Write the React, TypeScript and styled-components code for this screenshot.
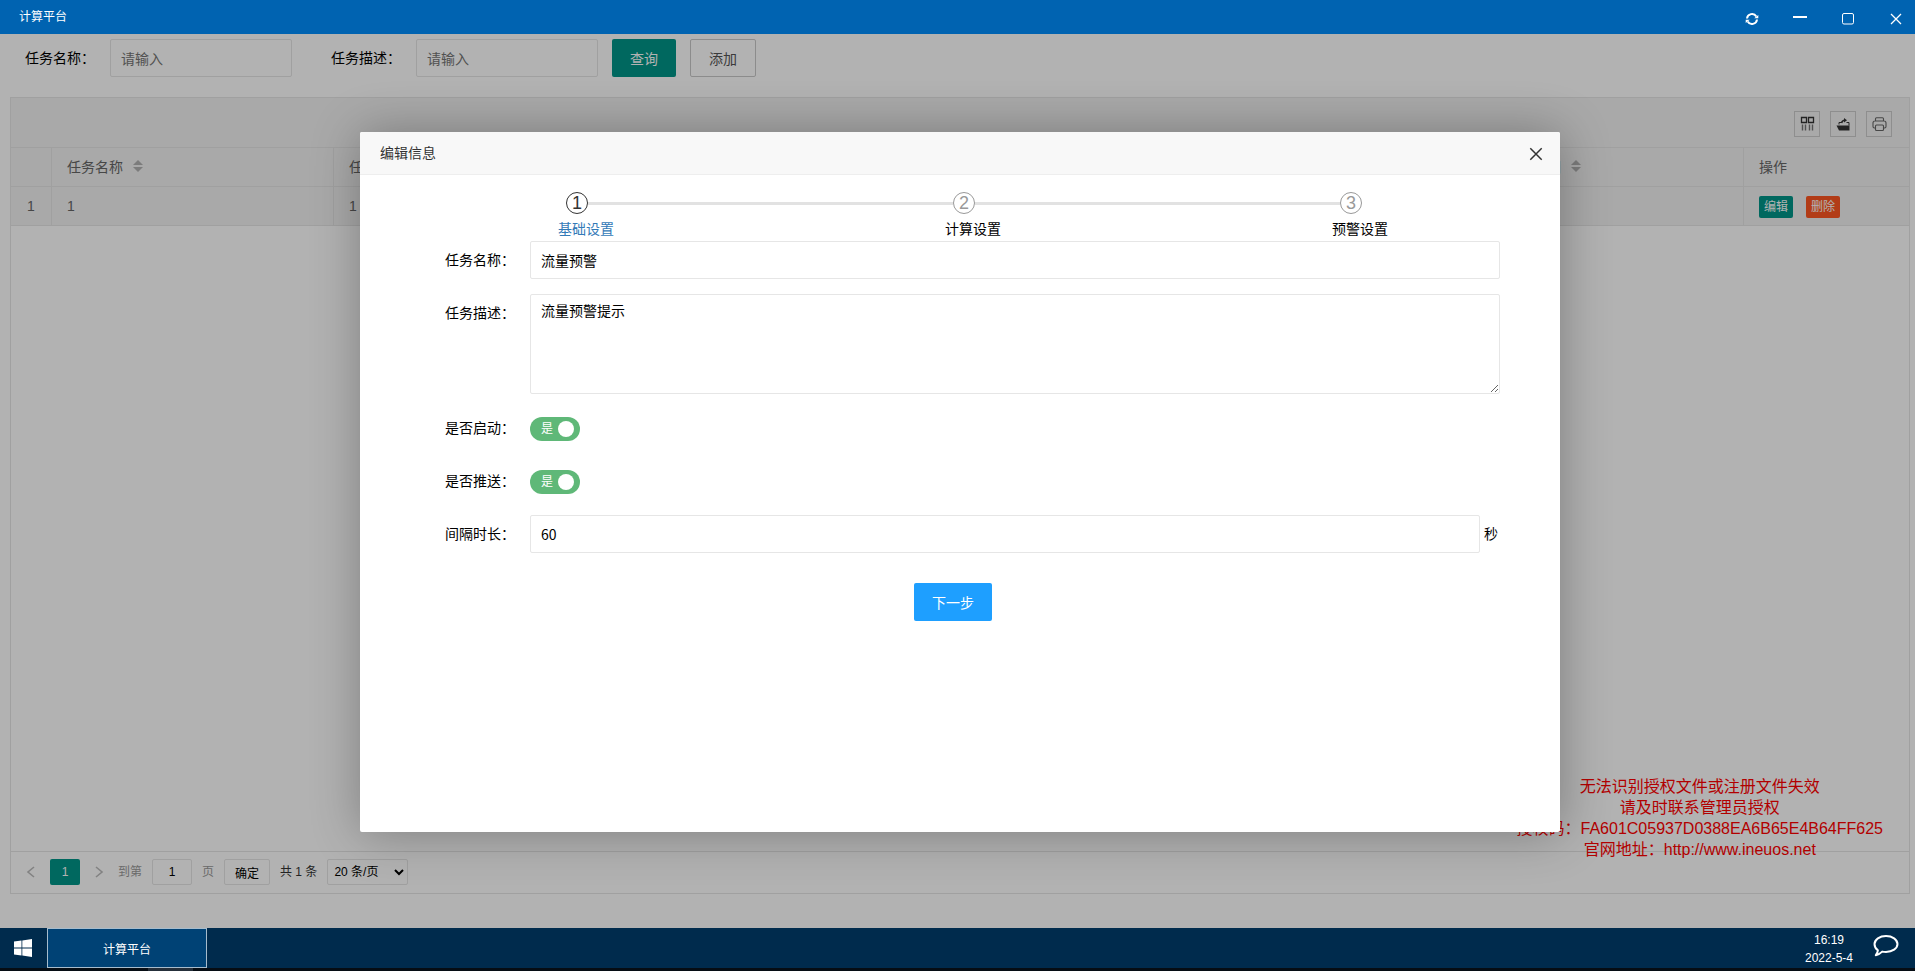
import React, { useState } from "react";
import styled, { createGlobalStyle, css } from "styled-components";

const GlobalStyle = createGlobalStyle`
  * { box-sizing: border-box; }
  html, body, #root { height: 100%; }
  body {
    margin: 0;
    overflow: hidden;
    font: 14px/24px "Liberation Sans", "Noto Sans CJK SC", sans-serif;
    color: #000;
  }
  button, input, select, textarea { font-family: inherit; margin: 0; }
  button { cursor: pointer; padding: 0; }
  a { color: inherit; text-decoration: none; }
`;

const Desktop = styled.div`
  height: 100%;
  display: flex;
  flex-direction: column;
  background: #fff;
`;

const TitleBar = styled.header`
  flex: none;
  height: 34px;
  padding-left: 19px;
  display: flex;
  justify-content: space-between;
  align-items: center;
  background: #0063b1;
  color: #fff;
  font-size: 12px;
`;

const WindowTitle = styled.span`
  line-height: 34px;
`;

const WindowControls = styled.div`
  display: flex;
  height: 34px;
  padding-right: 3px;
`;

const WindowButton = styled.button`
  width: 32px;
  margin-right: 16px;
  border: 0;
  background: none;
  color: #fff;
  display: flex;
  align-items: center;
  justify-content: center;
  padding-top: 4px;
  &:last-child { margin-right: 0; }
`;

const Workspace = styled.main`
  position: relative;
  flex: 1;
  min-height: 0;
  display: flex;
  flex-direction: column;
  padding: 5px 5px 34px 0;
`;

const SearchForm = styled.form`
  display: flex;
  gap: 14px;
  margin-bottom: 20px;
`;

const SearchField = styled.div`
  display: flex;
`;

const FieldLabel = styled.label<{ $wide?: boolean }>`
  flex: none;
  width: ${(p) => (p.$wide ? "100px" : "110px")};
  padding: 7px 15px 7px 0;
  text-align: right;
  white-space: nowrap;
`;

const inputLook = css`
  border: 1px solid #e6e6e6;
  border-radius: 2px;
  background: #fff;
  font-size: 14px;
  color: #000;
  outline: none;
`;

const TextInput = styled.input`
  ${inputLook}
  height: 38px;
  padding: 0 10px;
  font-family: "Noto Sans CJK SC", sans-serif;
  &::placeholder { color: #757575; }
`;

const SearchInput = styled(TextInput)`
  width: 182px;
`;

const Button = styled.button<{ $tone: "primary" | "plain" | "normal" }>`
  height: 38px;
  padding: 0 18px;
  border-radius: 2px;
  font-size: 14px;
  color: ${(p) => (p.$tone === "plain" ? "#555" : "#fff")};
  background: ${(p) => ({ primary: "#009688", plain: "#fff", normal: "#1e9fff" })[p.$tone]};
  border: ${(p) => (p.$tone === "plain" ? "1px solid #c9c9c9" : "0")};
`;

const TablePanel = styled.section`
  flex: 1;
  min-height: 0;
  margin-left: 10px;
  display: flex;
  flex-direction: column;
  border: 1px solid #e6e6e6;
`;

const TableToolbar = styled.div`
  height: 50px;
  padding: 2px 17px 0 0;
  display: flex;
  align-items: center;
  justify-content: flex-end;
  gap: 10px;
  background: #f2f2f2;
  border-bottom: 1px solid #e6e6e6;
`;

const ToolButton = styled.button`
  width: 26px;
  height: 26px;
  border: 1px solid #ccc;
  background: none;
  color: #333;
  display: flex;
  align-items: center;
  justify-content: center;
`;

const TableBody = styled.div`
  flex: 1;
`;

const DataTable = styled.table`
  width: 100%;
  table-layout: fixed;
  border-collapse: separate;
  border-spacing: 0;
  color: #666;
`;

const Cell = styled.td<{ $center?: boolean }>`
  height: 39px;
  padding: 0 15px;
  font-weight: 400;
  text-align: ${(p) => (p.$center ? "center" : "left")};
  white-space: nowrap;
  background: #f2f2f2;
  border: 0 solid #e6e6e6;
  border-width: 0 1px 1px 0;
  &:last-child { border-right-width: 0; }
`;

const HeaderLabel = styled.div`
  display: flex;
  align-items: center;
  gap: 10px;
`;

const SortMark = styled.span`
  display: flex;
  flex-direction: column;
  gap: 2px;
  padding-bottom: 3px;
  &::before, &::after {
    content: "";
    border: 5px solid transparent;
  }
  &::before { border-top-width: 0; border-bottom-color: #b2b2b2; }
  &::after { border-bottom-width: 0; border-top-color: #b2b2b2; }
`;

const RowActions = styled.div`
  display: flex;
  gap: 13px;
  padding-top: 2px;
`;

const RowButton = styled.button<{ $danger?: boolean }>`
  width: 34px;
  height: 22px;
  border: 0;
  border-radius: 2px;
  font-size: 12px;
  line-height: 22px;
  color: #fff;
  background: ${(p) => (p.$danger ? "#ff5722" : "#009688")};
`;

const Pager = styled.nav`
  height: 42px;
  display: flex;
  align-items: center;
  padding: 0 7px 1px;
  border-top: 1px solid #e6e6e6;
  font-size: 12px;
  color: #333;
`;

const PageArrow = styled.button`
  width: 26px;
  height: 26px;
  margin-right: 6px;
  border: 0;
  background: none;
  color: #bbb;
  display: flex;
  align-items: center;
  justify-content: center;
`;

const CurrentPage = styled.span`
  width: 30px;
  height: 26px;
  margin-right: 6px;
  border-radius: 2px;
  background: #009688;
  color: #fff;
  line-height: 26px;
  text-align: center;
`;

const PagerText = styled.label<{ $muted?: boolean }>`
  color: ${(p) => (p.$muted ? "#999" : "#333")};
  margin-right: 10px;
`;

const PageInput = styled.input`
  ${inputLook}
  width: 40px;
  height: 26px;
  padding: 0;
  margin-right: 10px;
  font-size: 12px;
  text-align: center;
`;

const PageConfirm = styled.button`
  ${inputLook}
  width: 46px;
  height: 26px;
  margin-right: 10px;
  font-size: 12px;
`;

const PageSize = styled.select`
  ${inputLook}
  width: 81px;
  height: 26px;
  padding: 0 2px;
  font-size: 12px;
`;

const LicenseNotice = styled.aside`
  position: absolute;
  right: 32px;
  bottom: 68px;
  font-size: 16px;
  line-height: 21px;
  text-align: center;
  color: #f00;
`;

const LicenseLine = styled.div`
  white-space: nowrap;
`;

const Shade = styled.div`
  position: absolute;
  inset: 0;
  display: grid;
  place-items: center;
  padding: 2px 0 0 5px;
  background: rgba(0, 0, 0, 0.3);
`;

const Dialog = styled.section`
  width: 1200px;
  max-width: 100%;
  height: 700px;
  max-height: 100%;
  border-radius: 2px;
  background: #fff;
  box-shadow: 1px 1px 50px rgba(0, 0, 0, 0.3);
`;

const DialogHeader = styled.header`
  height: 43px;
  padding: 0 16px 0 20px;
  display: flex;
  align-items: center;
  justify-content: space-between;
  background: #f8f8f8;
  border-bottom: 1px solid #eee;
  border-radius: 2px 2px 0 0;
  color: #333;
`;

const DialogClose = styled.button`
  width: 16px;
  height: 18px;
  border: 0;
  background: none;
  color: #333;
  display: flex;
  align-items: flex-end;
`;

const Steps = styled.ol`
  display: flex;
  list-style: none;
  margin: 0;
  padding: 17px 0 0 198px;
`;

const Step = styled.li<{ $active?: boolean }>`
  flex: none;
  width: 387px;
  color: ${(p) => (p.$active ? "#337ab7" : "#000")};
`;

const StepTrack = styled.div`
  display: flex;
  align-items: center;
  padding-left: 8px;
  margin-bottom: 3px;
`;

const StepNumber = styled.span<{ $active?: boolean }>`
  flex: none;
  width: 22px;
  height: 22px;
  border: 1px solid ${(p) => (p.$active ? "#333" : "#999")};
  border-radius: 50%;
  color: ${(p) => (p.$active ? "#333" : "#999")};
  font-size: 18px;
  line-height: 20px;
  text-align: center;
`;

const StepLine = styled.span`
  width: 365px;
  flex: none;
  height: 3px;
  background: #e2e2e2;
`;

const EditForm = styled.form`
  display: grid;
  gap: 15px;
  padding: 0 60px 0 70px;
`;

const FormRow = styled.div`
  display: flex;
  min-height: 38px;
`;

const WideInput = styled(TextInput)`
  flex: 1;
  min-width: 0;
`;

const DescriptionInput = styled.textarea`
  ${inputLook}
  flex: 1;
  min-width: 0;
  height: 100px;
  padding: 6px 10px;
  line-height: 20px;
  resize: vertical;
`;

const Unit = styled.span`
  padding: 7px 2px 7px 4px;
`;

const SwitchTrack = styled.label`
  position: relative;
  width: 50px;
  height: 24px;
  margin-top: 8px;
  padding: 0 6px 0 11px;
  display: flex;
  align-items: center;
  justify-content: space-between;
  border-radius: 12px;
  background: #5fb878;
  color: #fff;
  font-size: 12px;
  cursor: pointer;
  &:has(input:not(:checked)) {
    flex-direction: row-reverse;
    padding: 0 11px 0 6px;
    background: #d2d2d2;
  }
`;

const SwitchInput = styled.input`
  position: absolute;
  inset: 0;
  margin: 0;
  opacity: 0;
`;

const SwitchKnob = styled.span`
  width: 16px;
  height: 16px;
  border-radius: 50%;
  background: #fff;
`;

const FormActions = styled.div`
  display: flex;
  justify-content: center;
  padding: 15px 24px 0 0;
`;

const Taskbar = styled.footer`
  flex: none;
  height: 40px;
  display: flex;
  background: #002b4d;
  color: #fff;
  font-size: 12px;
`;

const ScreenEdge = styled.div`
  flex: none;
  height: 3px;
  padding-left: 148px;
  background: #060d14;
  &::before {
    content: "";
    display: block;
    width: 45px;
    height: 3px;
    background: #252f3a;
  }
`;

const StartButton = styled.button`
  width: 47px;
  padding-right: 1px;
  border: 0;
  background: none;
  display: flex;
  align-items: center;
  justify-content: center;
`;

const TaskItem = styled.button`
  width: 160px;
  border: 1px solid #a6bccd;
  background: #004275;
  color: #fff;
  font-size: 12px;
`;

const Clock = styled.div`
  margin-left: auto;
  padding-top: 3px;
  line-height: 18px;
  text-align: center;
`;

const ChatButton = styled.button`
  width: 62px;
  padding: 0 0 4px 4px;
  border: 0;
  background: none;
  display: flex;
  align-items: center;
  justify-content: center;
`;

const RefreshIcon = () => (
  <svg width="14" height="14" viewBox="0 0 14 14" fill="none" stroke="currentColor" strokeWidth="2">
    <path d="M2 6.500A5 5 0 0 1 11.300 4.500M12 7.500A5 5 0 0 1 2.700 9.500" />
    <path d="M9.200 6.300H13.300V3zM4.800 7.700H.7V11z" fill="currentColor" stroke="none" />
  </svg>
);
const MinimizeIcon = () => (
  <svg width="14" height="14" viewBox="0 0 14 14"><path d="M0 4h14v2H0z" fill="currentColor" /></svg>
);
const MaximizeIcon = () => (
  <svg width="14" height="14" viewBox="0 0 14 14" fill="none" stroke="currentColor">
    <rect x="1.5" y="1.5" width="11" height="10.5" rx="1.5" />
  </svg>
);
const CrossIcon = ({ size = 14, weight = 1.3 }: { size?: number; weight?: number }) => (
  <svg width={size} height={size} viewBox="0 0 14 14" fill="none" stroke="currentColor" strokeWidth={weight}>
    <path d="M2 2l10 10M12 2L2 12" />
  </svg>
);
const ColumnsIcon = () => (
  <svg width="16" height="16" viewBox="0 0 16 16" fill="none" stroke="currentColor">
    <path d="M2.500 1.500h5v5h-5zM9.500 1.500h5v5h-5z" strokeWidth="1.3" />
    <path d="M3.500 8.500v6M6.500 8.500v6M10.500 8.500v6M13.500 8.500v6" strokeWidth="1.4" opacity=".65" />
  </svg>
);
const ExportIcon = () => (
  <svg width="16" height="16" viewBox="0 0 16 16" fill="none" stroke="currentColor">
    <path d="M3 9.500h11.500v5H4L1.500 9.500z" fill="currentColor" stroke="none" />
    <path d="M4 8.500V6.500h2M11.500 6.500h2.500V9.500" />
    <path d="M6.500 7c.4-1.800 1.500-2.700 3.500-2.800" strokeWidth="1.6" />
    <path d="M9 2L12 4.200 9 6.500z" fill="currentColor" stroke="none" />
  </svg>
);
const PrintIcon = () => (
  <svg width="16" height="16" viewBox="0 0 16 16" fill="none" stroke="#666" strokeWidth="1.1">
    <path d="M4.500 5V2.800a1 1 0 0 1 1-1h6a1 1 0 0 1 1 1V5M4 12H3.500a1.500 1.500 0 0 1-1.500-1.500V7a2 2 0 0 1 2-2h9a2 2 0 0 1 2 2v3.500a1.500 1.500 0 0 1-1.500 1.500H13" />
    <rect x="4.500" y="9" width="8" height="5.500" rx="1" />
  </svg>
);
const ArrowIcon = ({ back }: { back?: boolean }) => (
  <svg width="12" height="14" viewBox="0 0 12 14" fill="none" stroke="currentColor" strokeWidth="1.6">
    <path d={back ? "M9 2L3 7l6 5" : "M3 2l6 5-6 5"} />
  </svg>
);
const WindowsLogo = () => (
  <svg width="18" height="18" viewBox="0 0 18 18" fill="#fff">
    <path d="M0 2.600l7.500-1v7H0zM8.300 1.400L18 0v8.600H8.300zM0 9.400h7.500v7l-7.500-1zM8.300 9.400H18V18l-9.700-1.400z" />
  </svg>
);
const ChatIcon = () => (
  <svg width="26" height="24" viewBox="0 0 26 24" fill="none" stroke="#fff" strokeWidth="2" strokeLinejoin="round">
    <path d="M13 2c6.300 0 11.500 3.500 11.500 8S19.300 18 13 18c-1.400 0-2.600-.1-3.800-.4C7.400 19.400 5.400 20.700 2.800 21.200c1.300-1.500 2-2.900 2.100-4.900C2.800 14.800 1.500 12.500 1.500 10 1.500 5.500 6.700 2 13 2z" />
  </svg>
);

const columns = [
  { title: "任务名称", value: "1" },
  { title: "任务描述", value: "1" },
  { title: "是否启动", value: "是" },
  { title: "是否推送", value: "是" },
  { title: "间隔时长", value: "60" },
  { title: "最后执行时间", value: "" },
];

const steps = ["基础设置", "计算设置", "预警设置"];

function Switch({ id }: { id: string }) {
  const [on, setOn] = useState(true);
  return (
    <SwitchTrack>
      <SwitchInput id={id} type="checkbox" checked={on} onChange={() => setOn(!on)} />
      <span>{on ? "是" : "否"}</span>
      <SwitchKnob />
    </SwitchTrack>
  );
}

function TaskTable() {
  return (
    <TablePanel>
      <TableToolbar>
        <ToolButton aria-label="筛选列"><ColumnsIcon /></ToolButton>
        <ToolButton aria-label="导出"><ExportIcon /></ToolButton>
        <ToolButton aria-label="打印"><PrintIcon /></ToolButton>
      </TableToolbar>
      <TableBody>
        <DataTable>
          <colgroup>
            <col width="41" />
            {columns.map((c) => <col key={c.title} />)}
            <col width="165" />
          </colgroup>
          <thead>
            <tr>
              <Cell as="th" />
              {columns.map((c) => (
                <Cell as="th" key={c.title}>
                  <HeaderLabel>{c.title}<SortMark /></HeaderLabel>
                </Cell>
              ))}
              <Cell as="th">操作</Cell>
            </tr>
          </thead>
          <tbody>
            <tr>
              <Cell $center>1</Cell>
              {columns.map((c) => <Cell key={c.title}>{c.value}</Cell>)}
              <Cell>
                <RowActions>
                  <RowButton>编辑</RowButton>
                  <RowButton $danger>删除</RowButton>
                </RowActions>
              </Cell>
            </tr>
          </tbody>
        </DataTable>
      </TableBody>
      <Pager>
        <PageArrow aria-label="上一页"><ArrowIcon back /></PageArrow>
        <CurrentPage>1</CurrentPage>
        <PageArrow aria-label="下一页"><ArrowIcon /></PageArrow>
        <PagerText $muted htmlFor="page">到第</PagerText>
        <PageInput id="page" defaultValue="1" />
        <PagerText $muted htmlFor="page">页</PagerText>
        <PageConfirm>确定</PageConfirm>
        <PagerText htmlFor="page-size">共 1 条</PagerText>
        <PageSize id="page-size"><option>20 条/页</option></PageSize>
      </Pager>
    </TablePanel>
  );
}

function EditDialog() {
  return (
    <Dialog role="dialog" aria-labelledby="dialog-title">
      <DialogHeader>
        <span id="dialog-title">编辑信息</span>
        <DialogClose aria-label="关闭"><CrossIcon size={16} /></DialogClose>
      </DialogHeader>
      <Steps>
        {steps.map((name, i) => (
          <Step key={name} $active={i === 0}>
            <StepTrack>
              <StepNumber $active={i === 0}>{i + 1}</StepNumber>
              {i < steps.length - 1 && <StepLine />}
            </StepTrack>
            {name}
          </Step>
        ))}
      </Steps>
      <EditForm onSubmit={(e) => e.preventDefault()}>
        <FormRow>
          <FieldLabel $wide htmlFor="name">任务名称：</FieldLabel>
          <WideInput id="name" defaultValue="流量预警" />
        </FormRow>
        <FormRow>
          <FieldLabel $wide htmlFor="desc">任务描述：</FieldLabel>
          <DescriptionInput id="desc" defaultValue="流量预警提示" />
        </FormRow>
        <FormRow>
          <FieldLabel $wide htmlFor="enabled">是否启动：</FieldLabel>
          <Switch id="enabled" />
        </FormRow>
        <FormRow>
          <FieldLabel $wide htmlFor="push">是否推送：</FieldLabel>
          <Switch id="push" />
        </FormRow>
        <FormRow>
          <FieldLabel $wide htmlFor="interval">间隔时长：</FieldLabel>
          <WideInput id="interval" defaultValue="60" />
          <Unit>秒</Unit>
        </FormRow>
        <FormActions>
          <Button $tone="normal">下一步</Button>
        </FormActions>
      </EditForm>
    </Dialog>
  );
}

export default function App() {
  return (
    <Desktop lang="zh-CN">
      <GlobalStyle />
      <TitleBar>
        <WindowTitle>计算平台</WindowTitle>
        <WindowControls>
          <WindowButton aria-label="刷新"><RefreshIcon /></WindowButton>
          <WindowButton aria-label="最小化"><MinimizeIcon /></WindowButton>
          <WindowButton aria-label="最大化"><MaximizeIcon /></WindowButton>
          <WindowButton aria-label="关闭"><CrossIcon /></WindowButton>
        </WindowControls>
      </TitleBar>
      <Workspace>
        <SearchForm onSubmit={(e) => e.preventDefault()}>
          <SearchField>
            <FieldLabel htmlFor="q-name">任务名称：</FieldLabel>
            <SearchInput id="q-name" placeholder="请输入" />
          </SearchField>
          <SearchField>
            <FieldLabel htmlFor="q-desc">任务描述：</FieldLabel>
            <SearchInput id="q-desc" placeholder="请输入" />
          </SearchField>
          <Button $tone="primary">查询</Button>
          <Button $tone="plain" type="button">添加</Button>
        </SearchForm>
        <TaskTable />
        <LicenseNotice>
          <LicenseLine>无法识别授权文件或注册文件失效</LicenseLine>
          <LicenseLine>请及时联系管理员授权</LicenseLine>
          <LicenseLine>授权码：FA601C05937D0388EA6B65E4B64FF625</LicenseLine>
          <LicenseLine>官网地址：<a href="http://www.ineuos.net">http://www.ineuos.net</a></LicenseLine>
        </LicenseNotice>
        <Shade>
          <EditDialog />
        </Shade>
      </Workspace>
      <Taskbar>
        <StartButton aria-label="开始"><WindowsLogo /></StartButton>
        <TaskItem>计算平台</TaskItem>
        <Clock>
          <div>16:19</div>
          <div>2022-5-4</div>
        </Clock>
        <ChatButton aria-label="消息"><ChatIcon /></ChatButton>
      </Taskbar>
      <ScreenEdge />
    </Desktop>
  );
}
